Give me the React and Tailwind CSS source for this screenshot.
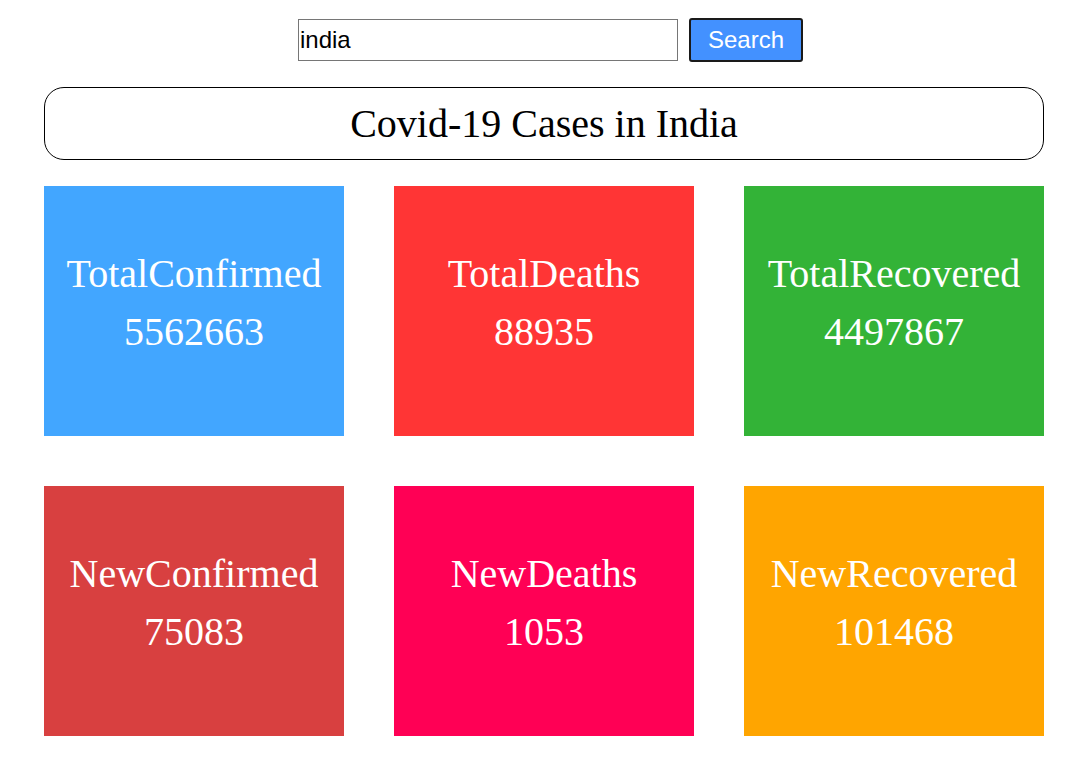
import React from 'react'

const CARDS = [
  { label: 'TotalConfirmed', value: 5562663, bg: 'bg-[#42a6ff]' },
  { label: 'TotalDeaths', value: 88935, bg: 'bg-[#ff3535]' },
  { label: 'TotalRecovered', value: 4497867, bg: 'bg-[#33b337]' },
  { label: 'NewConfirmed', value: 75083, bg: 'bg-[#d84040]' },
  { label: 'NewDeaths', value: 1053, bg: 'bg-[#ff0055]' },
  { label: 'NewRecovered', value: 101468, bg: 'bg-[#ffa500]' },
]

const StatCard = ({ label, value, bg }) => (
  <div className={`h-[250px] w-[300px] ${bg} pt-[59px] text-center text-[40px] leading-[58px] text-white`}>
    <div>{label}</div>
    <div>{value}</div>
  </div>
)

export default function App() {
  return (
    <div className="min-h-[771px] bg-white font-['Liberation_Serif',serif] text-black">
      {/* barre de recherche */}
      <div className="flex items-center justify-center gap-[11px] pl-[9px] pt-[18px]">
        <input
          defaultValue="india"
          className="h-[42px] w-[380px] border border-[#767676] px-[1px] font-['Liberation_Sans',Arial,sans-serif] text-[24px] text-black outline-none"
        />
        <button className="h-[44px] w-[114px] rounded-[3px] border-2 border-[#1a1a1a] bg-[#4391ff] font-['Liberation_Sans',Arial,sans-serif] text-[24px] text-white">
          Search
        </button>
      </div>

      <div className="ml-[44px] mt-[25px] flex h-[73px] w-[1000px] items-center justify-center rounded-[20px] border border-black">
        <h1 className="text-[40px] leading-none">Covid-19 Cases in India</h1>
      </div>

      <div className="ml-[44px] mt-[26px] grid w-[1000px] grid-cols-3 gap-[50px]">
        {CARDS.map((c) => (
          <StatCard key={c.label} {...c} />
        ))}
      </div>
    </div>
  )
}
